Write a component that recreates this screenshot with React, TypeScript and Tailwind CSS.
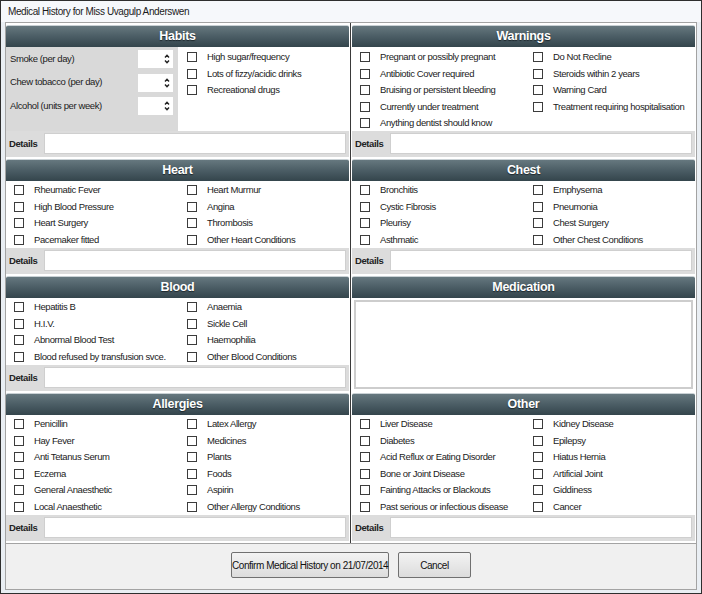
import React from 'react';

type Pair = [string, string?];

const heart: Pair[] = [
  ['Rheumatic Fever', 'Heart Murmur'],
  ['High Blood Pressure', 'Angina'],
  ['Heart Surgery', 'Thrombosis'],
  ['Pacemaker fitted', 'Other Heart Conditions'],
];

const blood: Pair[] = [
  ['Hepatitis B', 'Anaemia'],
  ['H.I.V.', 'Sickle Cell'],
  ['Abnormal Blood Test', 'Haemophilia'],
  ['Blood refused by transfusion svce.', 'Other Blood Conditions'],
];

const allergies: Pair[] = [
  ['Penicillin', 'Latex Allergy'],
  ['Hay Fever', 'Medicines'],
  ['Anti Tetanus Serum', 'Plants'],
  ['Eczema', 'Foods'],
  ['General Anaesthetic', 'Aspirin'],
  ['Local Anaesthetic', 'Other Allergy Conditions'],
];

const warnings: Pair[] = [
  ['Pregnant or possibly pregnant', 'Do Not Recline'],
  ['Antibiotic Cover required', 'Steroids within 2 years'],
  ['Bruising or persistent bleeding', 'Warning Card'],
  ['Currently under treatment', 'Treatment requiring hospitalisation'],
  ['Anything dentist should know'],
];

const chest: Pair[] = [
  ['Bronchitis', 'Emphysema'],
  ['Cystic Fibrosis', 'Pneumonia'],
  ['Pleurisy', 'Chest Surgery'],
  ['Asthmatic', 'Other Chest Conditions'],
];

const other: Pair[] = [
  ['Liver Disease', 'Kidney Disease'],
  ['Diabetes', 'Epilepsy'],
  ['Acid Reflux or Eating Disorder', 'Hiatus Hernia'],
  ['Bone or Joint Disease', 'Artificial Joint'],
  ['Fainting Attacks or Blackouts', 'Giddiness'],
  ['Past serious or infectious disease', 'Cancer'],
];

const Check: React.FC<{ label: string }> = ({ label }) => (
  <label className="flex items-center h-[16.5px] whitespace-nowrap">
    <input type="checkbox" className="appearance-none w-[10px] h-[10px] border border-[#3c3c3c] bg-white rounded-none shrink-0" />
    <span className="ml-[10px]">{label}</span>
  </label>
);

const Header: React.FC<{ title: string }> = ({ title }) => (
  <div className="h-[22px] flex items-center justify-center border-t border-[#c9d1d5] rounded-t-[2px] bg-gradient-to-b from-[#66787f] via-[#4b5d65] to-[#34454c] text-white font-bold text-[12.5px] tracking-[-0.3px] [text-shadow:0_1px_1px_#1c262b]">
    {title}
  </div>
);

const Details: React.FC = () => (
  <div className="h-[26px] flex bg-[#dcdcdc]">
    <div className="w-[38px] pl-[3px] flex items-center text-[#222] font-semibold">Details</div>
    <div className="flex-1 bg-white border border-[#cfcfcf] mt-[2px] mb-[3px] mr-[3px]" />
  </div>
);

const Rows: React.FC<{ rows: Pair[]; h: string; pt?: string }> = ({ rows, h, pt = 'pt-[1px]' }) => (
  <div className={`${h} ${pt} pl-[8px]`}>
    {rows.map(([a, b]) => (
      <div key={a} className="grid grid-cols-[173px_1fr]">
        <Check label={a} />
        {b ? <Check label={b} /> : <div />}
      </div>
    ))}
  </div>
);

const Spinner: React.FC = () => (
  <div className="w-[35px] h-[18px] bg-white flex items-center justify-end pr-[3px]">
    <svg width="6" height="12" viewBox="0 0 6 12" fill="none" stroke="#222" strokeWidth="1.4">
      <path d="M1 4.5 L3 2.2 L5 4.5" />
      <path d="M1 7.5 L3 9.8 L5 7.5" />
    </svg>
  </div>
);

export default function App() {
  return (
    <div className="w-[702px] h-[594px] flex flex-col bg-[#e9eef3] border border-[#2e2e2e] font-['Liberation_Sans',Arial,sans-serif] text-[9.5px] tracking-[-0.4px] text-[#1b1b1b] overflow-hidden">
      <div className="h-[21px] shrink-0 flex items-center pl-[7px] bg-[#f6f8fb] text-[10px]">
        Medical History for Miss Uvagulp Anderswen
      </div>

      <div className="mx-[4px] h-[522px] shrink-0 flex border border-[#a3a3a3] bg-white">
        {/* left column */}
        <div className="w-[343px] flex flex-col gap-[2px] pt-[2px]">
          <section>
            <Header title="Habits" />
            <div className="h-[84px] flex">
              <div className="w-[172px] bg-[#d9d9d9] pl-[4px] pr-[5px] pt-[3px] flex flex-col gap-[5.5px]">
                {['Smoke (per day)', 'Chew tobacco (per day)', 'Alcohol (units per week)'].map((l) => (
                  <div key={l} className="flex items-center justify-between">
                    <span>{l}</span>
                    <Spinner />
                  </div>
                ))}
              </div>
              <div className="pl-[9px] pt-[2px]">
                <Check label="High sugar/frequency" />
                <Check label="Lots of fizzy/acidic drinks" />
                <Check label="Recreational drugs" />
              </div>
            </div>
            <Details />
          </section>
          <section>
            <Header title="Heart" />
            <Rows rows={heart} h="h-[67px]" />
            <Details />
          </section>
          <section>
            <Header title="Blood" />
            <Rows rows={blood} h="h-[67px]" />
            <Details />
          </section>
          <section>
            <Header title="Allergies" />
            <Rows rows={allergies} h="h-[100px]" />
            <Details />
          </section>
        </div>

        {/* divider */}
        <div className="w-[3px] flex justify-center">
          <div className="w-px bg-[#3a3a3a]" />
        </div>

        {/* right column */}
        <div className="flex-1 flex flex-col gap-[2px] pt-[2px] pr-[1px]">
          <section>
            <Header title="Warnings" />
            <Rows rows={warnings} h="h-[84px]" pt="pt-[2px]" />
            <Details />
          </section>
          <section>
            <Header title="Chest" />
            <Rows rows={chest} h="h-[67px]" />
            <Details />
          </section>
          <section>
            <Header title="Medication" />
            <div className="h-[93px] pt-[2px] pb-[2px] px-[2px]">
              <div className="h-full bg-white border-2 border-[#cdcdcd]" />
            </div>
          </section>
          <section>
            <Header title="Other" />
            <Rows rows={other} h="h-[100px]" />
            <Details />
          </section>
        </div>
      </div>

      <div className="mx-[4px] flex-1 mb-[3px] bg-[#f0f0f0] border-x border-b border-[#a3a3a3] flex justify-center gap-[9px] pt-[8px]">
        <button className="w-[158px] h-[26px] px-0 whitespace-nowrap border border-[#707070] rounded-[2px] bg-gradient-to-b from-[#f3f3f3] to-[#dcdcdc] text-[10px] tracking-[-0.45px] text-[#111]">
          Confirm Medical History on 21/07/2014
        </button>
        <button className="w-[73px] h-[26px] border border-[#707070] rounded-[2px] bg-gradient-to-b from-[#f3f3f3] to-[#dcdcdc] text-[10px] text-[#111]">
          Cancel
        </button>
      </div>
    </div>
  );
}
